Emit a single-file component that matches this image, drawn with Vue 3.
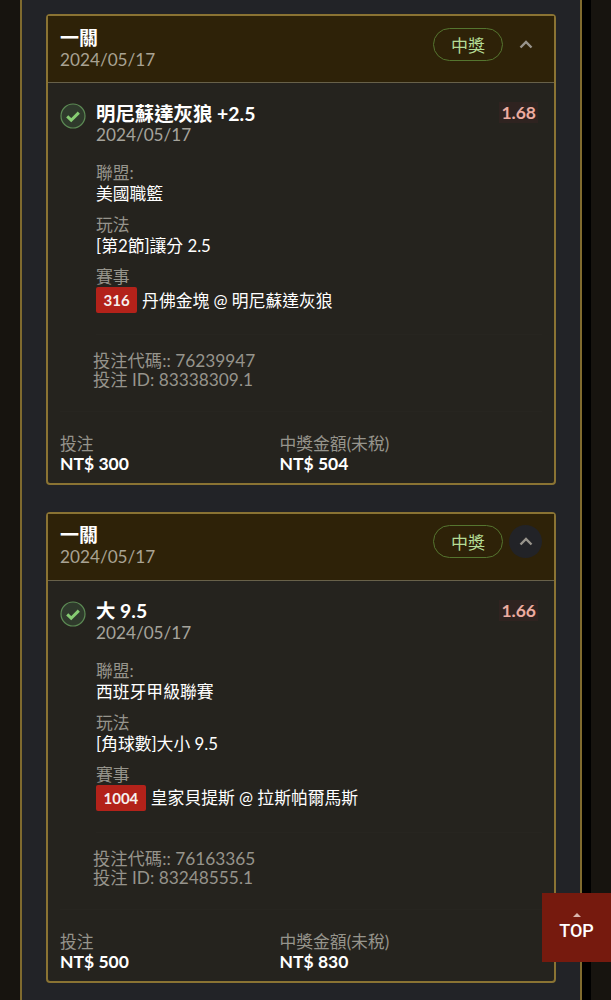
<script setup>
const bets = [
  {
    odds: '1.68', title: '明尼蘇達灰狼 +2.5', league: '美國職籃', play: '[第2節]讓分 2.5',
    num: '316', match: '丹佛金塊 @ 明尼蘇達灰狼', code: '76239947', id: '83338309.1',
    stake: 'NT$ 300', win: 'NT$ 504', active: false
  },
  {
    odds: '1.66', title: '大 9.5', league: '西班牙甲級聯賽', play: '[角球數]大小 9.5',
    num: '1004', match: '皇家貝提斯 @ 拉斯帕爾馬斯', code: '76163365', id: '83248555.1',
    stake: 'NT$ 500', win: 'NT$ 830', active: true
  }
]
</script>

<template>
  <div class="page">
    <div class="frame">
      <section class="card" v-for="bet in bets" :key="bet.id">
        <header class="card-head">
          <div>
            <div class="head-title">一關</div>
            <div class="head-date">2024/05/17</div>
          </div>
          <div class="head-right">
            <span class="pill">中獎</span>
            <span class="toggle" :class="{ active: bet.active }">
              <svg width="14" height="9" viewBox="0 0 14 9">
                <path d="M1.5 7.5 7 2l5.5 5.5" fill="none" stroke="#98948c" stroke-width="2.4" />
              </svg>
            </span>
          </div>
        </header>
        <div class="card-body">
          <div class="bet">
            <svg class="check" width="26" height="26" viewBox="0 0 26 26">
              <circle cx="13" cy="13" r="12" fill="#2f3a2c" stroke="#5c8a54" stroke-width="1.2" />
              <path d="M7.2 13.4 11.2 17.2 18.8 9.6" fill="none" stroke="#86cc72" stroke-width="3" />
            </svg>
            <div class="bet-main">
              <div class="bet-top">
                <span class="bet-title">{{ bet.title }}</span>
                <span class="odds">{{ bet.odds }}</span>
              </div>
              <div class="bet-date">2024/05/17</div>
              <div class="field">
                <div class="label">聯盟:</div>
                <div class="value">{{ bet.league }}</div>
              </div>
              <div class="field">
                <div class="label">玩法</div>
                <div class="value">{{ bet.play }}</div>
              </div>
              <div class="field">
                <div class="label">賽事</div>
                <div class="value match">
                  <span class="num">{{ bet.num }}</span>
                  <span>{{ bet.match }}</span>
                </div>
              </div>
            </div>
          </div>
          <div class="codes">
            <div>投注代碼:: {{ bet.code }}</div>
            <div>投注 ID: {{ bet.id }}</div>
          </div>
          <div class="totals">
            <div class="total">
              <div class="label">投注</div>
              <div class="amount">{{ bet.stake }}</div>
            </div>
            <div class="total">
              <div class="label">中獎金額(未稅)</div>
              <div class="amount">{{ bet.win }}</div>
            </div>
          </div>
        </div>
      </section>
    </div>
    <div class="side"></div>
    <a class="top-btn">
      <span class="top-arrow"></span>
      <span>TOP</span>
    </a>
  </div>
</template>

<style>
html, body {
  margin: 0;
  background: #15130f;
}
</style>

<style scoped>
.page {
  display: flex;
  height: 1000px;
  overflow: hidden;
  padding-left: 20px;
  background: #17140f;
  font-family: Lato, "Noto Sans CJK TC", sans-serif;
  color: #fff;
  box-sizing: border-box;
}
.frame {
  width: 562px;
  box-sizing: border-box;
  flex-shrink: 0;
  border-left: 2px solid #7f6a2e;
  border-right: 2px solid #7f6a2e;
  background: #222327;
  padding: 14px 24px 0;
  display: flex;
  flex-direction: column;
  gap: 26.5px;
}
.side {
  width: 9px;
  background: #000;
  flex-shrink: 0;
}
.card {
  border: 2px solid #8a7333;
  border-radius: 4px;
  background: #25231e;
  height: 471px;
  box-sizing: border-box;
  flex-shrink: 0;
}
.card-head {
  display: flex;
  justify-content: space-between;
  align-items: center;
  height: 67px;
  box-sizing: border-box;
  padding: 0 12px 2px;
  background: #2e2208;
  border-bottom: 1px solid #68614a;
}
.head-title {
  font-size: 19px;
  font-weight: 700;
  line-height: 22px;
}
.head-date {
  font-size: 17.2px;
  line-height: 21px;
  color: #a9a393;
}
.head-right {
  display: flex;
  align-items: center;
  gap: 6px;
  margin-top: -8px;
}
.pill {
  width: 70px;
  height: 33px;
  box-sizing: border-box;
  border: 1.5px solid #55752f;
  border-radius: 17px;
  color: #b4dc95;
  font-size: 17px;
  display: flex;
  align-items: center;
  justify-content: center;
}
.toggle {
  width: 33px;
  height: 33px;
  border-radius: 50%;
  display: flex;
  align-items: center;
  justify-content: center;
}
.toggle.active {
  background: #222327;
}
.card-body {
  padding: 18px 12px 0;
}
.bet {
  display: flex;
  gap: 10px;
}
.check {
  flex-shrink: 0;
  margin-top: 2px;
}
.bet-main {
  flex: 1;
  padding-bottom: 10px;
  border-bottom: 1px solid rgba(255, 255, 255, 0.012);
}
.bet-top {
  display: flex;
  justify-content: space-between;
  align-items: center;
  height: 22px;
  margin-bottom: 2px;
}
.bet-title {
  font-size: 19.4px;
  font-weight: 700;
}
.odds {
  font-size: 17.5px;
  font-weight: 700;
  color: #ecaca0;
  background: #2f2320;
  padding: 0 2px;
  margin: 1px 4px 0 0;
}
.bet-date {
  font-size: 17.2px;
  line-height: 20px;
  color: #a5a39c;
  margin-bottom: 18px;
}
.field {
  margin-bottom: 11px;
  font-size: 16.8px;
  line-height: 21px;
}
.label {
  font-size: 16.8px;
  line-height: 20px;
  color: #96948c;
}
.value {
  color: #fff;
}
.match {
  display: flex;
  align-items: center;
  gap: 5px;
  height: 26px;
}
.num {
  background: #b3221a;
  border-radius: 2px;
  color: #f6f0ee;
  font-weight: 700;
  font-size: 15px;
  padding: 0 7.5px;
  height: 26px;
  line-height: 26px;
}
.codes {
  margin-top: 16px;
  padding: 0 0 22px 33px;
  border-bottom: 1px solid rgba(255, 255, 255, 0.012);
  font-size: 17.3px;
  line-height: 19px;
  color: #96948c;
}
.totals {
  display: flex;
  margin-top: 22px;
}
.total {
  width: 219.5px;
}
.amount {
  font-size: 17.5px;
  font-weight: 700;
  line-height: 19px;
}
.top-btn {
  position: fixed;
  right: 0;
  top: 893px;
  width: 69px;
  height: 69px;
  background: #761a0e;
  display: flex;
  flex-direction: column;
  align-items: center;
  justify-content: center;
  font-family: Roboto, sans-serif;
  font-weight: 500;
  font-size: 18px;
  line-height: 22px;
}
.top-arrow {
  width: 0;
  height: 0;
  border-left: 4px solid transparent;
  border-right: 4px solid transparent;
  border-bottom: 4px solid #d9b6ae;
  margin-bottom: 3px;
}
</style>
